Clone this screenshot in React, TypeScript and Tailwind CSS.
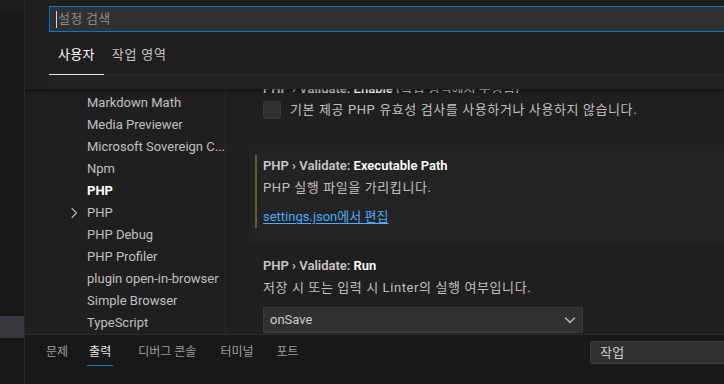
import React from "react";

const FONT = { fontFamily: 'Roboto, "Noto Sans CJK KR", sans-serif' };

const tocItems = [
  { label: "Markdown Math" },
  { label: "Media Previewer" },
  { label: "Microsoft Sovereign C..." },
  { label: "Npm" },
  { label: "PHP", active: true },
  { label: "PHP", chevron: true },
  { label: "PHP Debug" },
  { label: "PHP Profiler" },
  { label: "plugin open-in-browser" },
  { label: "Simple Browser" },
  { label: "TypeScript" },
];

const panelTabs = [
  { label: "문제", cls: "ml-[21px]" },
  { label: "출력", cls: "ml-[21px]", active: true },
  { label: "디버그 콘솔", cls: "ml-[27px]" },
  { label: "터미널", cls: "ml-[24px]" },
  { label: "포트", cls: "ml-[23px]" },
];

function Chevron({ className }: { className?: string }) {
  return (
    <svg className={className} viewBox="0 0 16 16" fill="none" stroke="currentColor" strokeWidth="1.2">
      <path strokeLinecap="round" strokeLinejoin="round" d="M6 3.5l4.5 4.5L6 12.5" />
    </svg>
  );
}

function ChevronDown({ className }: { className?: string }) {
  return (
    <svg className={className} viewBox="0 0 16 16" fill="none" stroke="currentColor" strokeWidth="1.2">
      <path strokeLinecap="round" strokeLinejoin="round" d="M3.5 6l4.5 4.5L12.5 6" />
    </svg>
  );
}

function SettingTitle({ name }: { name: string }) {
  return (
    <div className="h-[18px] leading-[18px] text-[13px] font-semibold whitespace-nowrap">
      <span className="text-[#c8c8c8]">PHP › Validate: </span>
      <span className="text-white">{name}</span>
    </div>
  );
}

export default function App() {
  return (
    <div className="w-[724px] h-[384px] flex overflow-hidden bg-[#1f1f1f] text-[#cccccc]" style={FONT}>
      {/* Left strip */}
      <aside className="w-[25px] shrink-0 flex flex-col bg-[#181818] border-r border-[#2b2b2b]">
        <div className="h-[14px] bg-[#1d1d1d] border-b border-[#161616]" />
        <div className="h-[302px]" />
        <div className="h-[22px] bg-[#37373d]" />
      </aside>

      {/* Main column */}
      <div className="flex-1 flex flex-col min-w-0">
        {/* Settings editor */}
        <div className="h-[334px] flex flex-col overflow-hidden">
          {/* Header */}
          <div className="pl-[24px] shrink-0 relative z-10 shadow-[0_2px_3px_rgba(0,0,0,0.45)]">
            <div className="pt-[6px]">
              <div className="w-[700px] h-[26px] border border-[#0078d4] bg-[#313131] flex items-center pl-[6px]">
                <span className="w-px h-[17px] bg-[#d4d4d4]" />
                <span className="ml-[1px] text-[13px] text-[#8b8b8b] tracking-[0.3px]">설정 검색</span>
              </div>
            </div>
            <div className="h-[43px] flex items-end border-b border-[#2b2b2b]">
              <div className="px-[9px] pb-[10px] border-b border-[#e7e7e7] -mb-px text-[13px] text-white leading-[18px] tracking-[0.3px]">
                사용자
              </div>
              <div className="px-[8px] pb-[10px] text-[13px] text-[#c4c4c4] leading-[18px] tracking-[0.8px]">작업 영역</div>
            </div>
            <div className="h-[14px] bg-[#222222]" />
          </div>

          {/* Body */}
          <div className="flex-1 flex min-h-0">
            <nav className="ml-[24px] w-[177px] shrink-0 border-r border-[#2b2b2b] pt-[3px]">
              {tocItems.map((item, i) => (
                <div key={i} className="h-[22px] flex items-center text-[13px] whitespace-nowrap">
                  <div className="w-[38px] flex justify-end pr-[5px]">
                    {item.chevron && <Chevron className="w-4 h-4 text-[#b0b0b0]" />}
                  </div>
                  <span className={item.active ? "font-bold text-white" : "text-[#c0c0c0]"}>{item.label}</span>
                </div>
              ))}
            </nav>

            <div className="flex-1 min-w-0 overflow-hidden pl-[23px]">
              {/* Previous setting's title, scrolled under the header */}
              <div className="h-[4px] overflow-hidden pl-[14px]">
                <div className="-mt-[13px] whitespace-nowrap">
                  <span className="h-[18px] leading-[18px] text-[13px] font-semibold">
                    <span className="text-[#c8c8c8]">PHP › Validate: </span>
                    <span className="text-white">Enable</span>
                    <span className="text-[#c8c8c8] font-normal"> (작업 영역에서 수정됨)</span>
                  </span>
                </div>
              </div>

              <div className="mt-[8px] pl-[14px] flex items-center gap-[9px] h-[18px]">
                <div className="w-[18px] h-[18px] rounded-[3px] bg-[#313131] border border-[#3c3c3c]" />
                <span className="text-[13px] text-[#c0c0c0] whitespace-nowrap tracking-[0.6px]">
                  기본 제공 PHP 유효성 검사를 사용하거나 사용하지 않습니다.
                </span>
              </div>

              {/* Focused setting */}
              <div className="mt-[26px] w-[520px] bg-[#232323] pt-[12px] pb-[17px] pl-[6px]">
                <div className="border-l-2 border-[#6e5a2a] pl-[6px] py-[2px] -my-[2px]">
                  <SettingTitle name="Executable Path" />
                  <div className="mt-[4px] h-[18px] leading-[18px] text-[13px] text-[#c0c0c0] tracking-[0.6px]">
                    PHP 실행 파일을 가리킵니다.
                  </div>
                  <div className="mt-[11px] h-[18px] leading-[18px] text-[13px]">
                    <span className="text-[#4daafc] underline underline-offset-2">settings.json에서 편집</span>
                  </div>
                </div>
              </div>

              {/* Run setting */}
              <div className="pl-[14px] mt-[14px]">
                <SettingTitle name="Run" />
                <div className="mt-[4px] h-[18px] leading-[18px] text-[13px] text-[#c0c0c0] whitespace-nowrap tracking-[0.6px]">
                  저장 시 또는 입력 시 Linter의 실행 여부입니다.
                </div>
                <div className="mt-[10px] w-[320px] h-[26px] bg-[#313131] border border-[#3c3c3c] rounded-[2px] flex items-center justify-between pl-[6px] pr-[4px]">
                  <span className="text-[13px] text-[#cccccc]">onSave</span>
                  <ChevronDown className="w-4 h-4 text-[#c5c5c5]" />
                </div>
              </div>
            </div>
          </div>
        </div>

        {/* Bottom panel */}
        <div className="flex-1 border-t border-[#2b2b2b] bg-[#181818] flex items-start">
          <div className="flex items-start pt-[9px]">
            {panelTabs.map((t) => (
              <div key={t.label} className={`${t.cls} flex flex-col items-center`}>
                <span className={`text-[12px] leading-[16px] whitespace-nowrap ${t.active ? "text-[#e7e7e7]" : "text-[#9d9d9d]"}`}>
                  {t.label}
                </span>
                <span className={`mt-[5px] h-px w-[calc(100%+4px)] ${t.active ? "bg-[#0078d4]" : "bg-transparent"}`} />
              </div>
            ))}
          </div>
          <div className="ml-auto mt-[6px] w-[140px] h-[23px] -mr-[6px] bg-[#313131] border border-[#3c3c3c] rounded-[2px] flex items-center pl-[9px]">
            <span className="text-[13px] text-[#cccccc] tracking-[0.3px]">작업</span>
          </div>
        </div>
      </div>
    </div>
  );
}
